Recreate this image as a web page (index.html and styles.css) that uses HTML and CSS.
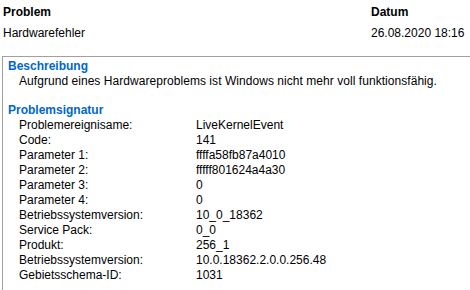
FILE: index.html
```html
<!DOCTYPE html>
<html lang="de">
<head>
  <meta charset="UTF-8" />
  <title>Problemdetails</title>
  <link rel="stylesheet" href="styles.css">
</head>
<body>
  <div class="header">
    <div class="col-title">Problem</div>
    <div class="col-title">Datum</div>
    <div>Hardwarefehler</div>
    <div>26.08.2020 18:16</div>
  </div>

  <div class="details">
    <div class="section">
      <h2>Beschreibung</h2>
      <p class="desc">Aufgrund eines Hardwareproblems ist Windows nicht mehr voll funktionsfähig.</p>
    </div>
    <div class="section">
      <h2>Problemsignatur</h2>
      <div class="sig">
        <span>Problemereignisame:</span><span>LiveKernelEvent</span>
        <span>Code:</span><span>141</span>
        <span>Parameter 1:</span><span>ffffa58fb87a4010</span>
        <span>Parameter 2:</span><span>fffff801624a4a30</span>
        <span>Parameter 3:</span><span>0</span>
        <span>Parameter 4:</span><span>0</span>
        <span>Betriebssystemversion:</span><span>10_0_18362</span>
        <span>Service Pack:</span><span>0_0</span>
        <span>Produkt:</span><span>256_1</span>
        <span>Betriebssystemversion:</span><span>10.0.18362.2.0.0.256.48</span>
        <span>Gebietsschema-ID:</span><span>1031</span>
      </div>
    </div>
  </div>
</body>
</html>
```

FILE: styles.css
```css
body {
  margin: 0;
  font-family: "Liberation Sans", Arial, sans-serif;
  font-size: 12px;
  line-height: 15px;
  color: #000;
  background: #fff;
  overflow: hidden;
}
.header {
  display: grid;
  grid-template-columns: 368px auto;
  row-gap: 6px;
  padding: 5px 0 0 3px;
}
.col-title {
  font-weight: bold;
}
.details {
  box-sizing: border-box;
  height: 234px;
  margin: 15px 0 0 2px;
  border-top: 1px solid #a0a0a0;
  border-left: 1px solid #a0a0a0;
  padding: 2px 0 0 0;
}
.section + .section {
  margin-top: 14px;
}
h2 {
  margin: 0 0 0 5px;
  font-size: 12px;
  font-weight: bold;
  color: #0066cc;
}
.desc {
  margin: 0 0 0 16px;
  letter-spacing: 0.05px;
}
.sig {
  display: grid;
  grid-template-columns: 177px auto;
  margin: 0 0 0 16px;
}
```
